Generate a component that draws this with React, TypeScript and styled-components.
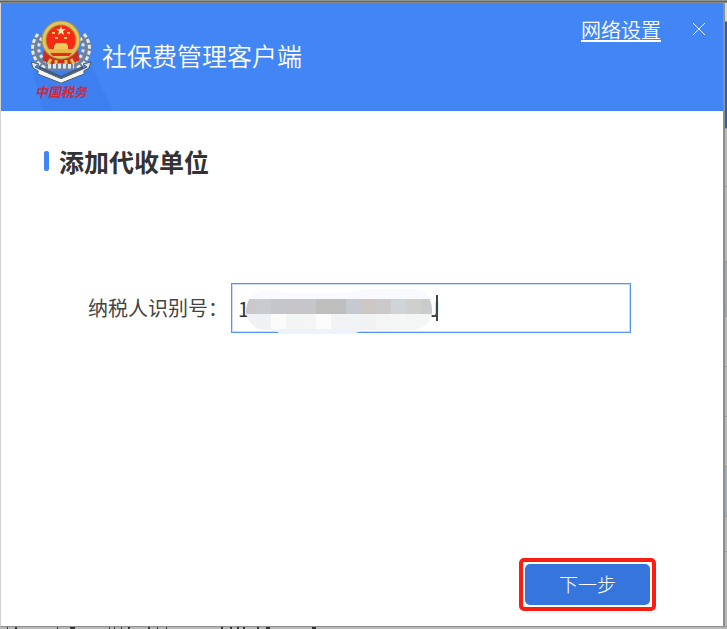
import React, { useState } from "react";
import styled, { createGlobalStyle } from "styled-components";

const GlobalStyle = createGlobalStyle`
  *, *::before, *::after { box-sizing: border-box; }
  html, body, #root { height: 100%; }
  body {
    margin: 0;
    overflow: hidden;
    font-family: "Noto Sans CJK SC", "Noto Sans", sans-serif;
    color: #333;
  }
`;

const Desktop = styled.div`
  height: 100%;
  display: grid;
  grid-template-columns: minmax(0, 1fr) 2px;
  grid-template-rows: 3px minmax(0, 1fr) 2px;
  background: #b8b8b8;
`;

const TopEdge = styled.div`
  grid-column: 1 / -1;
  background: linear-gradient(#8f9496 1px, #4f6478 1px, #4f6478 2px, #8a8a88 2px);
`;

const Backdrop = styled.div`
  display: flex;
  flex-direction: column;
`;

const BackdropPart = styled.div<{ $size?: number; $color: string }>`
  flex: ${(p) => (p.$size ? `0 0 ${p.$size}px` : "1 1 0")};
  background: ${(p) => p.$color};
  border-bottom: 1px solid #999;
`;

const BottomEdge = styled.svg`
  grid-column: 1 / -1;
  width: 100%;
  height: 2px;
  display: block;
`;

const Dialog = styled.main`
  display: flex;
  flex-direction: column;
  background: #fff;
  border-left: 1px solid #d4d4d4;
  border-right: 2px solid #8f8f8f;
  border-bottom: 1px solid #8f8f8f;
`;

const Header = styled.header`
  position: relative;
  flex: 0 0 108px;
  display: flex;
  align-items: flex-start;
  padding: 14px 17px 0 29px;
  background: #4286f5;
  color: #fff;
`;

const HeaderShade = styled.svg`
  position: absolute;
  left: 30px;
  bottom: 0;
  width: 82px;
  height: 48px;
`;

const Brand = styled.div`
  position: relative;
  width: 62px;
  display: flex;
  flex-direction: column;
  align-items: center;
`;

const Emblem = styled.svg`
  display: block;
  width: 62px;
  height: 66px;
`;

const BrandName = styled.span`
  font-size: 13px;
  line-height: 18px;
  font-weight: 700;
  font-style: italic;
  color: #d3283a;
  white-space: nowrap;
`;

const Title = styled.h1`
  flex: 1;
  margin: 19px 0 0 10px;
  font-size: 25px;
  line-height: 38px;
  font-weight: 350;
`;

const SettingsLink = styled.a`
  font-size: 20px;
  line-height: 26px;
  font-weight: 350;
  color: #fff;
  text-underline-offset: 2px;
  text-decoration-thickness: 2px;
`;

const CloseButton = styled.button`
  margin: 5px 0 0 31px;
  padding: 0;
  border: 0;
  width: 14px;
  height: 14px;
  background: none;
  color: #e2ecff;
  svg { display: block; }
`;

const Content = styled.form`
  flex: 1;
  display: flex;
  flex-direction: column;
  padding: 32px 67px 15px 43px;
`;

const SectionTitle = styled.h2`
  display: flex;
  align-items: center;
  gap: 10px;
  margin: 0;
  font-size: 25px;
  line-height: 36px;
  font-weight: 700;
  color: #333;
  &::before {
    content: "";
    width: 5px;
    height: 20px;
    border-radius: 2px;
    background: #4286f5;
  }
`;

const FieldRow = styled.div`
  display: flex;
  align-items: center;
  margin: 104px 25px 0 44px;
`;

const Label = styled.label`
  width: 143px;
  font-size: 20px;
  line-height: 30px;
  color: #444;
  white-space: nowrap;
`;

const Field = styled.div`
  position: relative;
  flex: 1;
`;

const TextInput = styled.input`
  display: block;
  width: 100%;
  height: 50px;
  padding: 0 6px;
  border: 1px solid #5591f6;
  outline: 0;
  box-shadow: inset 0 0 0 1px #c9ddfd;
  background: #fff;
  font: inherit;
  font-size: 20px;
  color: #333;
`;

const Mosaic = styled.svg`
  position: absolute;
  left: 15px;
  top: 6px;
  width: 188px;
  height: 46px;
`;

const Caret = styled.span`
  position: absolute;
  left: 205px;
  top: 12px;
  width: 2px;
  height: 26px;
  background: #444;
`;

const Actions = styled.div`
  display: flex;
  justify-content: flex-end;
  margin-top: auto;
`;

const Highlight = styled.div`
  padding: 2px;
  border: 4px solid #fb1d12;
  border-radius: 5px;
`;

const PrimaryButton = styled.button`
  display: block;
  width: 125px;
  height: 41px;
  padding: 0 0 3px;
  border: 0;
  border-radius: 5px;
  background: #3575dc;
  color: #fff;
  font: inherit;
  font-size: 19px;
  font-weight: 300;
`;

const topCells = ["#c9c9cb", "#c9cbd0", "#c4c6c9", "#c8c5c8", "#c4c6ca", "#bebebc", "#bdbebd", "#c6c9cf", "#ccc7c5", "#cbc9cc", "#d0d3d8", "#cfcfcd", "#cacbcc"];
const bottomCells = ["#f0f2f3", "#eff2f2", "#fbfbfb", "#f3f4f4", "#f5f5f6", "#fcfcfc", "#f1f3f4", "#f1f3f4", "#f2f2f2", "#f5f5f6", "#f5f6f6", "#f4f5f5", "#f4f5f5"];

const EmblemArt = () => (
  <Emblem viewBox="0 0 62 66" aria-hidden="true">
    <g fill="none">
      <path d="M10 19C2 28 4 43 18 49M52 19c8 9 6 24-8 30" stroke="#6e829c" strokeWidth="9" />
      <path d="M8 17C-1 28 1 43 15 51M54 17c9 11 7 26-7 34" stroke="#e6e9ec" strokeWidth="3" strokeDasharray="4 2" />
      <path d="M12 21C6 29 8 41 20 47M50 21c6 8 4 20-8 26" stroke="#dfe3e6" strokeWidth="3" strokeDasharray="3 3" />
      <path d="M18 50h26" stroke="#6e829c" strokeWidth="7" />
      <path d="M18 49h26" stroke="#e3e6e9" strokeWidth="5" strokeDasharray="3 2" />
    </g>
    <path d="M14 31l-1 13 9 3 9-1 9 1 9-3-1-13z" fill="#cf2a1e" />
    <path d="M21 42l-3 5M26 43v4M36 43v4M41 42l3 5" stroke="#e3c14c" strokeWidth="3" />
    <circle cx="31" cy="23" r="17" fill="#f62a14" stroke="#b39338" strokeWidth="5" />
    <circle cx="31" cy="23" r="17" fill="none" stroke="#dfc463" strokeWidth="3" />
    <path d="M31 9l1 3h4l-3 2 1 4-3-2-3 2 1-4-3-2h4z" fill="#ffe9a0" />
    <path d="M22 15h3v2h-3zM37 15h3v2h-3zM25 20h3v2h-3zM34 20h3v2h-3zM26 26h10l2 3v3H24v-3z" fill="#f5c95b" />
    <path d="M17 32h28l-3 4H20z" fill="#e7b949" />
    <path d="M20 36h22l-3 3H23z" fill="#e92a18" />
    <path d="M1 45l8 2-4 3 26 12 26-12-4-3 8-2-2 6-5 3v3L31 66 8 57v-3l-5-3z" fill="#dfe2e4" stroke="#4c5b6d" strokeWidth="1" />
    <path d="M9 50l22 10 22-10" fill="none" stroke="#4c5968" strokeWidth="2" />
    <path d="M9 55l22 9 22-9" fill="none" stroke="#f4f5f3" strokeWidth="3" />
  </Emblem>
);

export default function App() {
  const [taxId, setTaxId] = useState("1" + "\u3000".repeat(9) + "J");
  return (
    <>
      <GlobalStyle />
      <Desktop>
        <TopEdge />
        <Dialog>
          <Header>
            <HeaderShade viewBox="0 0 82 48" aria-hidden="true">
              <path d="M2 10L12 48H82L61 4z" fill="#3d7fee" />
            </HeaderShade>
            <Brand>
              <EmblemArt />
              <BrandName>中国税务</BrandName>
            </Brand>
            <Title>社保费管理客户端</Title>
            <SettingsLink href="#network">网络设置</SettingsLink>
            <CloseButton type="button" aria-label="关闭">
              <svg width="14" height="14" viewBox="0 0 14 14" fill="none" stroke="currentColor">
                <path d="M1 1l12 12M13 1L1 13" />
              </svg>
            </CloseButton>
          </Header>
          <Content onSubmit={(e) => e.preventDefault()}>
            <SectionTitle>添加代收单位</SectionTitle>
            <FieldRow>
              <Label htmlFor="taxpayer-id">纳税人识别号：</Label>
              <Field>
                <TextInput id="taxpayer-id" value={taxId} onChange={(e) => setTaxId(e.target.value)} />
                <Mosaic viewBox="0 0 188 46" aria-hidden="true">
                  <defs>
                    <clipPath id="smudge">
                      <path d="M0 22C1 7 10 1 22 1C34 1 38 4 46 4H94C105 3 112 0 124 0H168C180 1 186 9 186 22C186 34 176 41 164 41H118L106 45H36L27 41H20C8 41 1 33 0 22z" />
                    </clipPath>
                  </defs>
                  <g clipPath="url(#smudge)">
                    <rect width="188" height="46" fill="#f8faff" />
                    {topCells.map((fill, i) => (
                      <rect key={i} x={i * 15 - 5} y="10" width="15" height="15" fill={fill} />
                    ))}
                    {bottomCells.map((fill, i) => (
                      <rect key={i} x={i * 15 - 5} y="25" width="15" height="15" fill={fill} />
                    ))}
                    <rect y="40" width="188" height="6" fill="#edf3fd" />
                  </g>
                </Mosaic>
                <Caret />
              </Field>
            </FieldRow>
            <Actions>
              <Highlight>
                <PrimaryButton type="submit">下一步</PrimaryButton>
              </Highlight>
            </Actions>
          </Content>
        </Dialog>
        <Backdrop>
          <BackdropPart $size={19} $color="#d9d9d9" />
          <BackdropPart $size={107} $color="#2f5fb5" />
          <BackdropPart $size={58} $color="#b8b8b8" />
          <BackdropPart $size={75} $color="#b8b8b8" />
          <BackdropPart $size={55} $color="#a2a5ac" />
          <BackdropPart $size={50} $color="#b8b8b8" />
          <BackdropPart $size={50} $color="#b8b8b8" />
          <BackdropPart $size={50} $color="#b8b8b8" />
          <BackdropPart $size={50} $color="#9facb9" />
          <BackdropPart $size={35} $color="#b8b8b8" />
          <BackdropPart $color="#b8b8b8" />
        </Backdrop>
        <BottomEdge viewBox="0 0 727 2" preserveAspectRatio="xMinYMin slice" aria-hidden="true">
          <path d="M7 1h1M15 1h2M57 1h1M70 1h5M109 1h1M114 1h1M121 1h1M128 1h2M148 1h2M157 1h1M166 1h1M221 1h2M230 1h2M237 1h2M243 1h2M257 1h2M266 1h4M312 1h4" stroke="#333" strokeWidth="2" />
        </BottomEdge>
      </Desktop>
    </>
  );
}
